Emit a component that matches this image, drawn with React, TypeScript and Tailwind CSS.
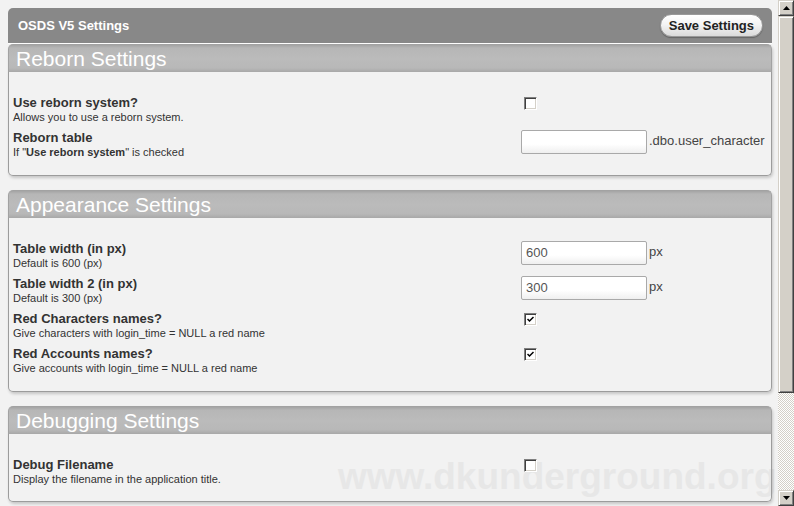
import React from "react";

type Row = {
    label: string;
    desc: React.ReactNode;
    control: React.ReactNode;
};

const Check: React.FC<{ checked?: boolean }> = ({checked}) => (
    <span
        className="ml-[3px] mt-[2px] flex h-[13px] w-[13px] items-center justify-center border border-b-white border-l-[#808080] border-r-white border-t-[#808080] bg-white shadow-[inset_1px_1px_0_#404040,inset_-1px_-1px_0_#d4d0c8]">
        {checked && (
            <svg width="7" height="7" viewBox="0 0 7 7">
                <path d="M0.5 3 L2.5 5 L6.5 1" fill="none" stroke="#000" strokeWidth="1.5"/>
            </svg>
        )}
    </span>
);

const TextBox: React.FC<{ value?: string; suffix?: string }> = ({value, suffix}) => (
    <div className="flex items-center">
        <div
            className="flex h-[24px] w-[126px] items-center rounded-[2px] border border-[#a9a9a9] bg-[linear-gradient(to_bottom,#ffffff_0%,#ffffff_60%,#efefef_100%)] px-[4px] text-[13px] text-[#555]">
            {value}
        </div>
        {suffix && <span className="ml-[2px] -mt-[2px] text-[13px] text-[#444]">{suffix}</span>}
    </div>
);

const Section: React.FC<{ title: string; rows: Row[]; pb: string; first?: boolean }> = ({title, rows, pb, first}) => (
    <div className={`${first ? "" : "mt-[14px]"} rounded-[5px] shadow-[1px_2px_3px_rgba(0,0,0,0.18)]`}>
        <div
            className="flex h-[28px] items-center rounded-t-[5px] border-x border-t border-[#a2a2a2] bg-[linear-gradient(to_bottom,#a4a4a4_0px,#b6b6b6_3px,#bbbbbb_50%,#b8b8b8_85%,#a8a8a8_100%)] pl-[7px]">
            <span className="text-[21px] leading-none text-white">{title}</span>
        </div>
        <div className={`rounded-b-[5px] border-x border-b border-[#9c9c9c] pl-[4px] pt-[23px] ${pb}`}>
            {rows.map((r, i) => (
                <div key={i} className="mb-[6px] flex">
                    <div className="w-[508px] shrink-0">
                        <div className="text-[13px] font-bold leading-[16px] text-[#333]">{r.label}</div>
                        <div className="text-[11px] leading-[13px] text-[#333]">{r.desc}</div>
                    </div>
                    <div>{r.control}</div>
                </div>
            ))}
        </div>
    </div>
);

const ScrollBtn: React.FC<{ down?: boolean }> = ({down}) => (
    <div
        className="flex h-[16px] w-[16px] items-center justify-center border border-b-[#404040] border-l-[#d4d0c8] border-r-[#404040] border-t-[#d4d0c8] bg-[#d4d0c8] shadow-[inset_1px_1px_0_#fff,inset_-1px_-1px_0_#808080]">
        <svg width="7" height="4" viewBox="0 0 7 4">
            {down ? <path d="M0 0 H7 L3.5 4 Z" fill="#000"/> : <path d="M0 4 H7 L3.5 0 Z" fill="#000"/>}
        </svg>
    </div>
);

export default function App() {
    const reborn: Row[] = [
        {label: "Use reborn system?", desc: "Allows you to use a reborn system.", control: <Check/>},
        {
            label: "Reborn table",
            desc: <>If "<b>Use reborn system</b>" is checked</>,
            control: <TextBox suffix=".dbo.user_character"/>
        },
    ];
    const appearance: Row[] = [
        {label: "Table width (in px)", desc: "Default is 600 (px)", control: <TextBox value="600" suffix="px"/>},
        {label: "Table width 2 (in px)", desc: "Default is 300 (px)", control: <TextBox value="300" suffix="px"/>},
        {label: "Red Characters names?", desc: "Give characters with login_time = NULL a red name", control: <Check checked/>},
        {label: "Red Accounts names?", desc: "Give accounts with login_time = NULL a red name", control: <Check checked/>},
    ];
    const debugging: Row[] = [
        {label: "Debug Filename", desc: "Display the filename in the application title.", control: <Check/>},
    ];

    return (
        <div className="flex h-[506px] w-[794px] overflow-hidden bg-[#f2f2f2] font-['Liberation_Sans',Arial,sans-serif]">
            <div className="relative flex-1 pl-[8px] pr-[6px] pt-[8px]">
                {/* watermark */}
                <div
                    className="pointer-events-none absolute left-[338px] top-[449px] whitespace-nowrap text-[37px] font-bold text-[#e7e7e7]">
                    www.dkunderground.org
                </div>
                <div className="relative">
                    <div
                        className="flex h-[36px] items-center justify-between rounded-t-[5px] border-b border-white bg-[#888888] pl-[10px] pr-[9px]">
                        <span className="text-[13px] font-bold text-white">OSDS V5 Settings</span>
                        <button
                            className="h-[23px] rounded-full border border-[#999] bg-[linear-gradient(to_bottom,#ffffff_0%,#f4f4f4_45%,#dadada_100%)] px-[8px] text-[13px] font-bold text-[#222] shadow-[0_1px_1px_rgba(0,0,0,0.25)]">
                            Save Settings
                        </button>
                    </div>
                    <Section first title="Reborn Settings" rows={reborn} pb="pb-[10px]"/>
                    <Section title="Appearance Settings" rows={appearance} pb="pb-[10px]"/>
                    <Section title="Debugging Settings" rows={debugging} pb="pb-[9px]"/>
                </div>
            </div>
            {/* scrollbar */}
            <div className="flex w-[16px] flex-col">
                <ScrollBtn/>
                <div
                    className="h-[377px] border border-b-[#404040] border-l-[#d4d0c8] border-r-[#404040] border-t-[#d4d0c8] bg-[#d4d0c8] shadow-[inset_1px_1px_0_#fff,inset_-1px_-1px_0_#808080]"/>
                <div
                    className="flex-1 bg-[repeating-conic-gradient(#d4d0c8_0%_25%,#ffffff_0%_50%)] bg-[length:2px_2px]"/>
                <ScrollBtn down/>
            </div>
        </div>
    );
}
